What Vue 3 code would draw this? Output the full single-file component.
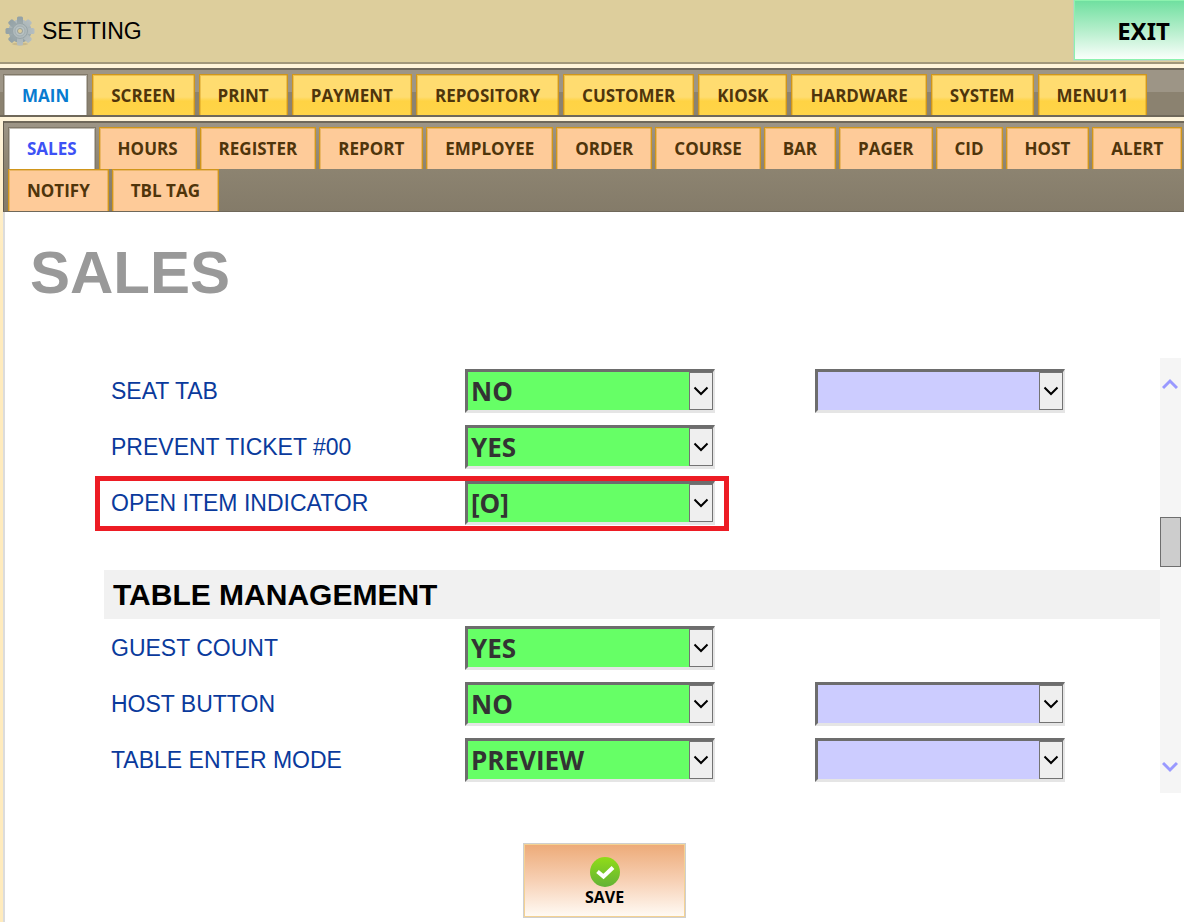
<script setup>
import { ref } from 'vue'

const mainTabs = ['MAIN', 'SCREEN', 'PRINT', 'PAYMENT', 'REPOSITORY', 'CUSTOMER', 'KIOSK', 'HARDWARE', 'SYSTEM', 'MENU11']
const subTabs = ['SALES', 'HOURS', 'REGISTER', 'REPORT', 'EMPLOYEE', 'ORDER', 'COURSE', 'BAR', 'PAGER', 'CID', 'HOST', 'ALERT', 'NOTIFY', 'TBL TAG']
const activeMain = ref('MAIN')
const activeSub = ref('SALES')

const groups = ref([
  {
    id: 'general',
    title: '',
    rows: [
      { id: 'seat-tab', label: 'SEAT TAB', value: 'NO', options: ['NO', 'YES'], extra: true },
      { id: 'prevent-ticket', label: 'PREVENT TICKET #00', value: 'YES', options: ['NO', 'YES'] },
      { id: 'open-item', label: 'OPEN ITEM INDICATOR', value: '[O]', options: ['[O]'], marked: true }
    ]
  },
  {
    id: 'table',
    title: 'TABLE MANAGEMENT',
    rows: [
      { id: 'guest-count', label: 'GUEST COUNT', value: 'YES', options: ['NO', 'YES'] },
      { id: 'host-button', label: 'HOST BUTTON', value: 'NO', options: ['NO', 'YES'], extra: true },
      { id: 'enter-mode', label: 'TABLE ENTER MODE', value: 'PREVIEW', options: ['PREVIEW'], extra: true }
    ]
  }
])
</script>

<template>
  <div class="page">
    <header class="header">
      <svg class="gear" viewBox="0 0 30 30" aria-hidden="true">
        <defs>
          <linearGradient id="steel" x1="0" y1="0" x2="0" y2="1">
            <stop offset="0" stop-color="#b5bec0" />
            <stop offset="1" stop-color="#93a1a5" />
          </linearGradient>
        </defs>
        <ellipse cx="15" cy="28" rx="8" ry="1.5" fill="#c9b98b" />
        <g fill="url(#steel)">
          <circle cx="15" cy="15" r="11.500" />
          <rect v-for="a in 4" :key="a" x="12" y="0.5" width="6" height="29" rx="1.5" :transform="`rotate(${a * 45} 15 15)`" />
        </g>
        <circle cx="15" cy="15" r="7.5" fill="#b0babc" stroke="#98a5a8" />
        <circle cx="15" cy="15" r="5" fill="#b8c2c3" stroke="#a2aeb1" />
        <circle cx="15" cy="15" r="2.5" fill="#dccd9b" stroke="#989f9c" />
      </svg>
      <span class="app-title">SETTING</span>
      <button class="exit" type="button">EXIT</button>
    </header>

    <nav class="bar main-bar">
      <button
        v-for="t in mainTabs"
        :key="t"
        type="button"
        class="tab gold"
        :class="{ active: t === activeMain }"
        @click="activeMain = t"
      >{{ t }}</button>
    </nav>

    <div class="body">
      <nav class="bar sub-bar">
        <button
          v-for="t in subTabs"
          :key="t"
          type="button"
          class="tab peach"
          :class="{ active: t === activeSub }"
          @click="activeSub = t"
        >{{ t }}</button>
      </nav>

      <main class="panel">
        <h1>SALES</h1>
        <div class="scroller">
          <div class="settings">
            <section v-for="g in groups" :key="g.id">
              <h2 v-if="g.title">{{ g.title }}</h2>
              <div class="rows">
                <div v-for="r in g.rows" :key="r.id" class="row" :class="{ marked: r.marked }">
                  <label :for="r.id">{{ r.label }}</label>
                  <div class="combo green">
                    <select :id="r.id" v-model="r.value">
                      <option v-for="o in r.options" :key="o">{{ o }}</option>
                    </select>
                    <span class="drop"><svg viewBox="0 0 16 10"><path d="M1.500 1.500L8 8l6.500-6.500" /></svg></span>
                  </div>
                  <div v-if="r.extra" class="combo lilac">
                    <select :aria-label="r.label + ' 2'"><option></option></select>
                    <span class="drop"><svg viewBox="0 0 16 10"><path d="M1.500 1.500L8 8l6.500-6.500" /></svg></span>
                  </div>
                </div>
              </div>
            </section>
          </div>
          <div class="track">
            <button type="button" aria-label="Scroll up"><svg viewBox="0 0 16 12"><path d="M1 10L8 3l7 7" /></svg></button>
            <span class="thumb"></span>
            <button type="button" aria-label="Scroll down"><svg viewBox="0 0 16 12"><path d="M1 2l7 7 7-7" /></svg></button>
          </div>
        </div>
        <button class="save" type="button">
          <svg viewBox="0 0 30 30" aria-hidden="true">
            <defs>
              <linearGradient id="leaf" x1="0" y1="0" x2="0" y2="1">
                <stop offset="0" stop-color="#91dc18" />
                <stop offset="1" stop-color="#62b236" />
              </linearGradient>
            </defs>
            <circle cx="15" cy="15" r="15" fill="url(#leaf)" />
            <path d="M7.500 14.500l6 5 9.500-9" fill="none" stroke="#fff" stroke-width="4" />
          </svg>
          <span>SAVE</span>
        </button>
      </main>
    </div>
  </div>
</template>

<style>
body {
  margin: 0;
  background: #fff;
}
</style>

<style scoped>
.page {
  min-height: 100vh;
  display: flex;
  flex-direction: column;
  overflow: hidden;
  font-family: "Liberation Sans", Arial, sans-serif;
  background: #fff4da;
}
button {
  font-family: inherit;
  cursor: pointer;
}
.header {
  height: 62px;
  display: flex;
  align-items: center;
  padding-left: 5px;
  background: #ddce9c;
  border-bottom: 2px solid #a1977a;
}
.gear {
  width: 30px;
  height: 30px;
}
.app-title {
  margin-left: 7px;
  font-size: 23px;
  color: #000;
}
.exit {
  width: 110px;
  height: 60px;
  margin-left: auto;
  margin-bottom: 2px;
  padding: 0 0 0 28px;
  border: 1px solid #8cf2ae;
  border-right: 0;
  outline: 1px solid #c3cfbc;
  background: linear-gradient(#70e0a0, #b4eecb 50%, #fafffb);
  font-family: "Noto Sans", sans-serif;
  font-size: 24px;
  font-weight: 700;
  color: #000;
}
.bar {
  display: flex;
  border-top: 2px solid #6f685a;
  border-bottom: 2px solid #6f685a;
}
.main-bar {
  gap: 4px;
  margin-top: 4px;
  padding: 4px 0 0 3px;
  background: linear-gradient(#9d9586 50%, #8b8270 50%);
}
.tab {
  padding: 0 18px;
  border: 1px solid #d0961b;
  border-bottom: 0;
  box-shadow: inset 1px 1px 0 rgba(208, 150, 27, 0.4), inset -1px 0 0 rgba(208, 150, 27, 0.4);
  font-family: "Open Sans", sans-serif;
  font-size: 17px;
  font-weight: 700;
  white-space: nowrap;
  color: #4f350b;
}
.gold {
  height: 41px;
  background: linear-gradient(#ffdc70 55%, #ffd344 65%, #ffd448);
}
.peach {
  height: 42px;
  background: #fecb99;
}
.tab.active {
  background: #fff;
  border-color: #817969;
  box-shadow: inset 1px 1px 0 #c0bcb4, inset -1px 0 0 #c0bcb4;
}
.gold.active {
  color: #087bd0;
}
.peach.active {
  color: #3d52f5;
}
.body {
  flex: 1;
  display: flex;
  flex-direction: column;
  margin-top: 4px;
  padding-left: 3px;
  background: linear-gradient(#fff4da, #ffebbd 140px);
}
.sub-bar {
  flex-wrap: wrap;
  gap: 0 3px;
  margin-right: -8px;
  padding: 4px 0 0 4px;
  border-left: 1px solid #625b4e;
  border-bottom-width: 1px;
  background: linear-gradient(#9d9586, #8d8471 50%, #847b69);
}
.panel {
  flex: 1;
  padding: 25px 3px 4px 0;
  border-left: 2px solid #dcdcdc;
  background: #fff;
}
h1 {
  margin: 0 0 0 25px;
  font-size: 60px;
  line-height: 72px;
  font-weight: 700;
  color: #999;
}
.scroller {
  display: flex;
  align-items: stretch;
  margin: 49px 0 0 99px;
}
.settings {
  flex: 1;
  padding: 11px 0;
}
.rows {
  display: flex;
  flex-direction: column;
  gap: 12px;
}
h2 {
  margin: 45px 0 7px;
  padding-left: 9px;
  font-size: 30px;
  line-height: 49px;
  font-weight: 700;
  color: #000;
  background: #f1f1f1;
}
.row {
  position: relative;
  display: grid;
  grid-template-columns: 354px 250px 250px;
  align-items: center;
  height: 44px;
  padding-left: 7px;
}
.combo.lilac {
  margin-left: 100px;
  width: 250px;
}
.row.marked::after {
  content: "";
  position: absolute;
  left: -9px;
  top: -5px;
  width: 624px;
  height: 45px;
  border: 5px solid #ed1c24;
  pointer-events: none;
}
label {
  font-size: 23px;
  color: #0a3a9c;
}
.combo {
  position: relative;
}
select {
  display: block;
  width: 100%;
  height: 44px;
  padding: 0 28px 0 3px;
  border: solid;
  border-width: 3px 2px 3px 3px;
  border-color: #6d6d6d #e5e5e5 #e5e5e5 #6d6d6d;
  border-radius: 0;
  appearance: none;
  font-family: "Open Sans", sans-serif;
  font-size: 26px;
  font-weight: 700;
  color: #333;
}
.green select {
  background: #6f6;
}
.lilac select {
  background: #ccf;
}
.drop {
  position: absolute;
  top: 3px;
  right: 2px;
  width: 24px;
  height: 38px;
  box-sizing: border-box;
  display: flex;
  align-items: center;
  justify-content: center;
  border: 1px solid #737373;
  background: #efefef;
  pointer-events: none;
}
.drop svg {
  width: 16px;
  height: 10px;
  fill: none;
  stroke: #000;
  stroke-width: 2;
}
.track {
  width: 21px;
  display: flex;
  flex-direction: column;
  background: #f5f5f5;
}
.track button {
  height: 52px;
  padding: 0;
  border: 0;
  background: none;
}
.track button:last-child {
  margin-top: auto;
}
.track svg {
  display: block;
  width: 16px;
  height: 12px;
  margin: 0 auto 0 2px;
  fill: none;
  stroke: #99f;
  stroke-width: 3;
}
.thumb {
  height: 48px;
  margin-top: 107px;
  border: 1px solid #6e6e6e;
  background: #cdcdcd;
}
.save {
  display: flex;
  flex-direction: column;
  align-items: center;
  width: 163px;
  height: 75px;
  margin: 50px auto 0 518px;
  padding: 12px 0 0;
  border: 2px solid #f4d293;
  outline: 1px solid #cfcfcf;
  outline-offset: -1px;
  background: linear-gradient(#edab79, #f7d0b4 50%, #fffaf4);
  font-family: "Open Sans", sans-serif;
  font-size: 16px;
  font-weight: 700;
  line-height: 20px;
  color: #000;
}
.save svg {
  width: 30px;
  height: 30px;
}
</style>
